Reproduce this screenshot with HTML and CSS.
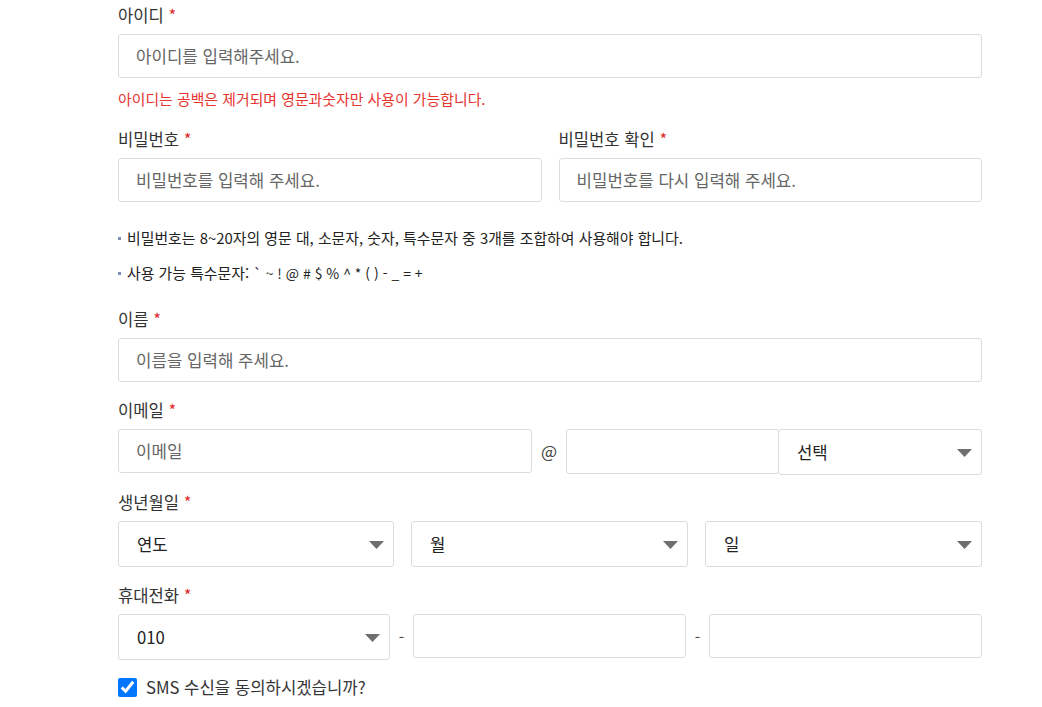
FILE: index.html
```html
<!DOCTYPE html>
<html lang="ko">
<head>
<meta charset="utf-8">
<title>회원가입</title>
<link rel="stylesheet" href="styles.css">
</head>
<body>
<form class="form">
  <div class="field field-id">
    <label class="label">아이디 <span class="req">*</span></label>
    <input class="input" type="text" placeholder="아이디를 입력해주세요.">
    <p class="error">아이디는 공백은 제거되며 영문과숫자만 사용이 가능합니다.</p>
  </div>

  <div class="grid2">
    <div class="field">
      <label class="label">비밀번호 <span class="req">*</span></label>
      <input class="input" type="password" placeholder="비밀번호를 입력해 주세요.">
    </div>
    <div class="field">
      <label class="label">비밀번호 확인 <span class="req">*</span></label>
      <input class="input" type="password" placeholder="비밀번호를 다시 입력해 주세요.">
    </div>
  </div>

  <ul class="notes">
    <li>비밀번호는 8~20자의 영문 대, 소문자, 숫자, 특수문자 중 3개를 조합하여 사용해야 합니다.</li>
    <li><span>사용 가능 특수문자: <span class="sym">` ~ ! @ # $ % ^ * ( ) - _ = +</span></span></li>
  </ul>

  <div class="field">
    <label class="label">이름 <span class="req">*</span></label>
    <input class="input" type="text" placeholder="이름을 입력해 주세요.">
  </div>

  <div class="field field-email">
    <label class="label">이메일 <span class="req">*</span></label>
    <div class="email-row">
      <input class="input email-id" type="text" placeholder="이메일">
      <span class="sep at">@</span>
      <input class="input email-domain" type="text">
      <div class="select email-select"><span>선택</span><svg class="arrow" width="15" height="8" viewBox="0 0 15 8"><path d="M0 0H15L7.5 8Z" fill="#6e6e6e"/></svg></div>
    </div>
  </div>

  <div class="field field-birth">
    <label class="label">생년월일 <span class="req">*</span></label>
    <div class="grid3">
      <div class="select"><span>연도</span><svg class="arrow" width="15" height="8" viewBox="0 0 15 8"><path d="M0 0H15L7.5 8Z" fill="#6e6e6e"/></svg></div>
      <div class="select"><span>월</span><svg class="arrow" width="15" height="8" viewBox="0 0 15 8"><path d="M0 0H15L7.5 8Z" fill="#6e6e6e"/></svg></div>
      <div class="select"><span>일</span><svg class="arrow" width="15" height="8" viewBox="0 0 15 8"><path d="M0 0H15L7.5 8Z" fill="#6e6e6e"/></svg></div>
    </div>
  </div>

  <div class="field field-phone">
    <label class="label">휴대전화 <span class="req">*</span></label>
    <div class="phone-row">
      <div class="select"><span>010</span><svg class="arrow" width="15" height="8" viewBox="0 0 15 8"><path d="M0 0H15L7.5 8Z" fill="#6e6e6e"/></svg></div>
      <span class="sep">-</span>
      <input class="input" type="text">
      <span class="sep">-</span>
      <input class="input" type="text">
    </div>
  </div>

  <label class="check">
    <input type="checkbox" checked>
    <span>SMS 수신을 동의하시겠습니까?</span>
  </label>
</form>
</body>
</html>
```
FILE: styles.css
```css
* { box-sizing: border-box; }
html, body { margin: 0; padding: 0; background: #fff; }
body {
  font-family: "Noto Sans CJK KR", "Noto Sans", sans-serif;
  color: #222;
}
.form {
  width: 864px;
  margin-left: 118px;
  padding-top: 3px;
  display: flex;
  flex-direction: column;
}
.field { display: flex; flex-direction: column; margin-bottom: 16px; }
.field-id { margin-bottom: 18px; }
.field-email { margin-bottom: 15px; }
.field-birth { margin-bottom: 16px; }
.field-phone { margin-bottom: 15px; }
.label {
  display: block;
  height: 24px;
  font-size: 16.6px;
  line-height: 24px;
  color: #333;
  margin-bottom: 7px;
  white-space: nowrap;
}
.req { color: #e02a2a; }
.input {
  height: 44px;
  border: 1px solid #dcdcdc;
  border-radius: 3px;
  padding: 0 17px;
  font: inherit;
  font-size: 16.8px;
  color: #222;
  background: #fff;
  outline: none;
  width: 100%;
}
.input::placeholder { color: #666; }
.error {
  margin: 11px 0 0;
  height: 20px;
  font-size: 14.9px;
  line-height: 20px;
  color: #e8342f;
}
.grid2 {
  display: grid;
  grid-template-columns: 1fr 1fr;
  column-gap: 17px;
}
.grid2 .field { margin-bottom: 0; }
.notes {
  list-style: none;
  margin: 26px 0 24px;
  padding: 0;
  display: flex;
  flex-direction: column;
  gap: 15px;
}
.notes li {
  height: 20px;
  font-size: 14.9px;
  line-height: 20px;
  color: #222;
  display: flex;
  align-items: center;
  gap: 6px;
}
.notes li::before {
  content: "";
  width: 3px;
  height: 3px;
  background: #7d90b3;
  flex: none;
}
.sym { font-size: 14px; }
.email-row {
  display: flex;
  align-items: flex-start;
}
.email-id { width: 414px; flex: none; }
.sep {
  flex: none;
  font-size: 15.5px;
  color: #444;
  align-self: center;
  text-align: center;
}
.at { width: 34px; margin-top: -3px; font-size: 17px; }
.email-domain { width: 213px; flex: none; height: 45px; }
.email-select { width: 204px; flex: none; margin-left: -1px; height: 45px; }
.select {
  position: relative;
  height: 46px;
  border: 1px solid #dcdcdc;
  border-radius: 3px;
  background: #fff;
  padding: 0 18px;
  display: flex;
  align-items: center;
  font-size: 16.7px;
  color: #222;
}
.arrow {
  position: absolute;
  right: 9px;
  top: 50%;
  margin-top: -3px;
}
.grid3 {
  display: grid;
  grid-template-columns: 276px 277px 277px;
  column-gap: 17px;
}
.phone-row {
  display: flex;
  align-items: flex-start;
}
.phone-row .select { width: 272px; flex: none; }
.phone-row .sep { width: 23px; margin-top: -2px; }
.phone-row .input { width: 273px; flex: none; }
.check {
  display: flex;
  align-items: center;
  gap: 9px;
  font-size: 16.7px;
  line-height: 24px;
  color: #333;
}
.check input {
  width: 19px;
  height: 19px;
  margin: 0;
  accent-color: #0075ff;
}
```
